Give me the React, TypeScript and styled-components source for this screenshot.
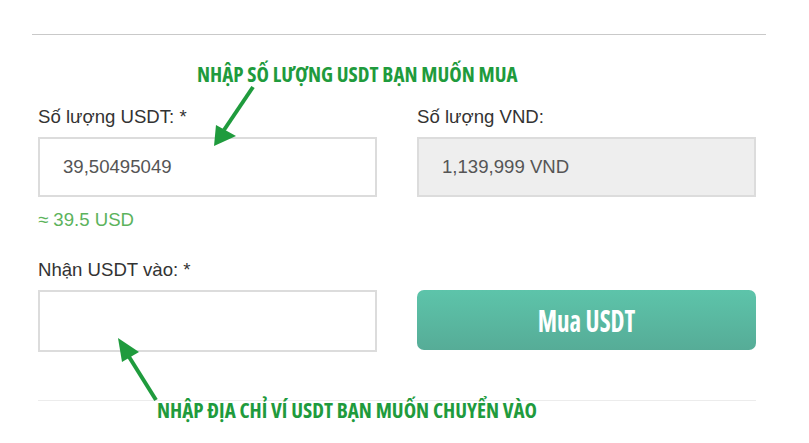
import React from "react"
import styled, { createGlobalStyle } from "styled-components"

const GlobalStyle = createGlobalStyle`
  html, body {
    margin: 0;
    padding: 0;
    background: #fff;
  }
  body {
    font-family: "Liberation Sans", Arial, sans-serif;
    color: #333;
  }
`

export default function App() {
  return (
    <Page>
      <GlobalStyle />
      <TopRule />
      <Note $indent={197} $top={27}>NHẬP SỐ LƯỢNG USDT BẠN MUỐN MUA</Note>
      <Form>
        <Field>
          <Label>Số lượng USDT: *</Label>
          <Input defaultValue="39,50495049" />
          <Hint>≈ 39.5 USD</Hint>
        </Field>
        <Field>
          <Label>Số lượng VND:</Label>
          <Input $readonly readOnly defaultValue="1,139,999 VND" />
        </Field>
        <Field>
          <Label>Nhận USDT vào: *</Label>
          <Input $tall />
        </Field>
        <Field $end>
          <BuyButton>
            <ButtonText>Mua USDT</ButtonText>
          </BuyButton>
        </Field>
      </Form>
      <BottomRule />
      <Note $indent={157} $top={-3}>NHẬP ĐỊA CHỈ VÍ USDT BẠN MUỐN CHUYỂN VÀO</Note>
      <Arrows width="809" height="443" viewBox="0 0 809 443">
        <line x1="253" y1="87" x2="224" y2="130" stroke="#1f9b3d" strokeWidth="4" />
        <polygon points="214,146 216,125 236,136" fill="#1f9b3d" />
        <line x1="156" y1="400" x2="126" y2="352" stroke="#1f9b3d" strokeWidth="4" />
        <polygon points="118,338 122,362 139,352" fill="#1f9b3d" />
      </Arrows>
    </Page>
  )
}

const Page = styled.div`
  position: relative;
  width: 809px;
  height: 443px;
  box-sizing: border-box;
  padding-top: 34px;
  overflow: hidden;
`
const TopRule = styled.div`
  margin: 0 43px 0 32px;
  height: 1px;
  background: #c9c9c9;
`
const Note = styled.div<{ $indent: number; $top: number }>`
  margin-top: ${p => p.$top}px;
  padding-left: ${p => p.$indent}px;
  font-family: "Liberation Sans Narrow", "Open Sans", sans-serif;
  font-stretch: condensed;
  font-weight: 700;
  font-size: 21px;
  line-height: 24px;
  color: #1f9b3d;
  transform-origin: left center;
  transform: scaleY(1.05);
`
const Form = styled.div`
  display: grid;
  grid-template-columns: 339px 339px;
  column-gap: 40px;
  row-gap: 28px;
  margin: 20px 0 0 38px;
`
const Field = styled.div<{ $end?: boolean }>`
  display: flex;
  flex-direction: column;
  justify-content: ${p => (p.$end ? "flex-end" : "flex-start")};
`
const Label = styled.div`
  font-size: 18.6px;
  line-height: 22px;
  color: #333;
  margin-bottom: 9px;
`
const Input = styled.input<{ $readonly?: boolean; $tall?: boolean }>`
  box-sizing: border-box;
  width: 339px;
  height: ${p => (p.$tall ? 62 : 60)}px;
  border: 2px solid #dcdcdc;
  background: ${p => (p.$readonly ? "#eeeeee" : "#fff")};
  padding: 0 23px;
  font-family: "Liberation Sans", Arial, sans-serif;
  font-size: 18.6px;
  color: #555;
  outline: none;
`
const Hint = styled.div`
  margin-top: 12px;
  font-size: 18.6px;
  line-height: 22px;
  color: #5cb35c;
`
const BuyButton = styled.button`
  width: 339px;
  height: 60px;
  margin-bottom: 2px;
  border: none;
  border-radius: 7px;
  background: linear-gradient(to bottom, #5dc4aa, #56ac97);
  color: #fff;
  cursor: pointer;
`
const ButtonText = styled.span`
  display: inline-block;
  font-family: "Liberation Sans Narrow", "Open Sans", sans-serif;
  font-stretch: condensed;
  font-weight: 700;
  font-size: 25px;
  transform: scaleY(1.18);
`
const BottomRule = styled.div`
  margin: 48px 53px 0 38px;
  height: 1px;
  background: #ececec;
`
const Arrows = styled.svg`
  position: absolute;
  left: 0;
  top: 0;
  pointer-events: none;
`
